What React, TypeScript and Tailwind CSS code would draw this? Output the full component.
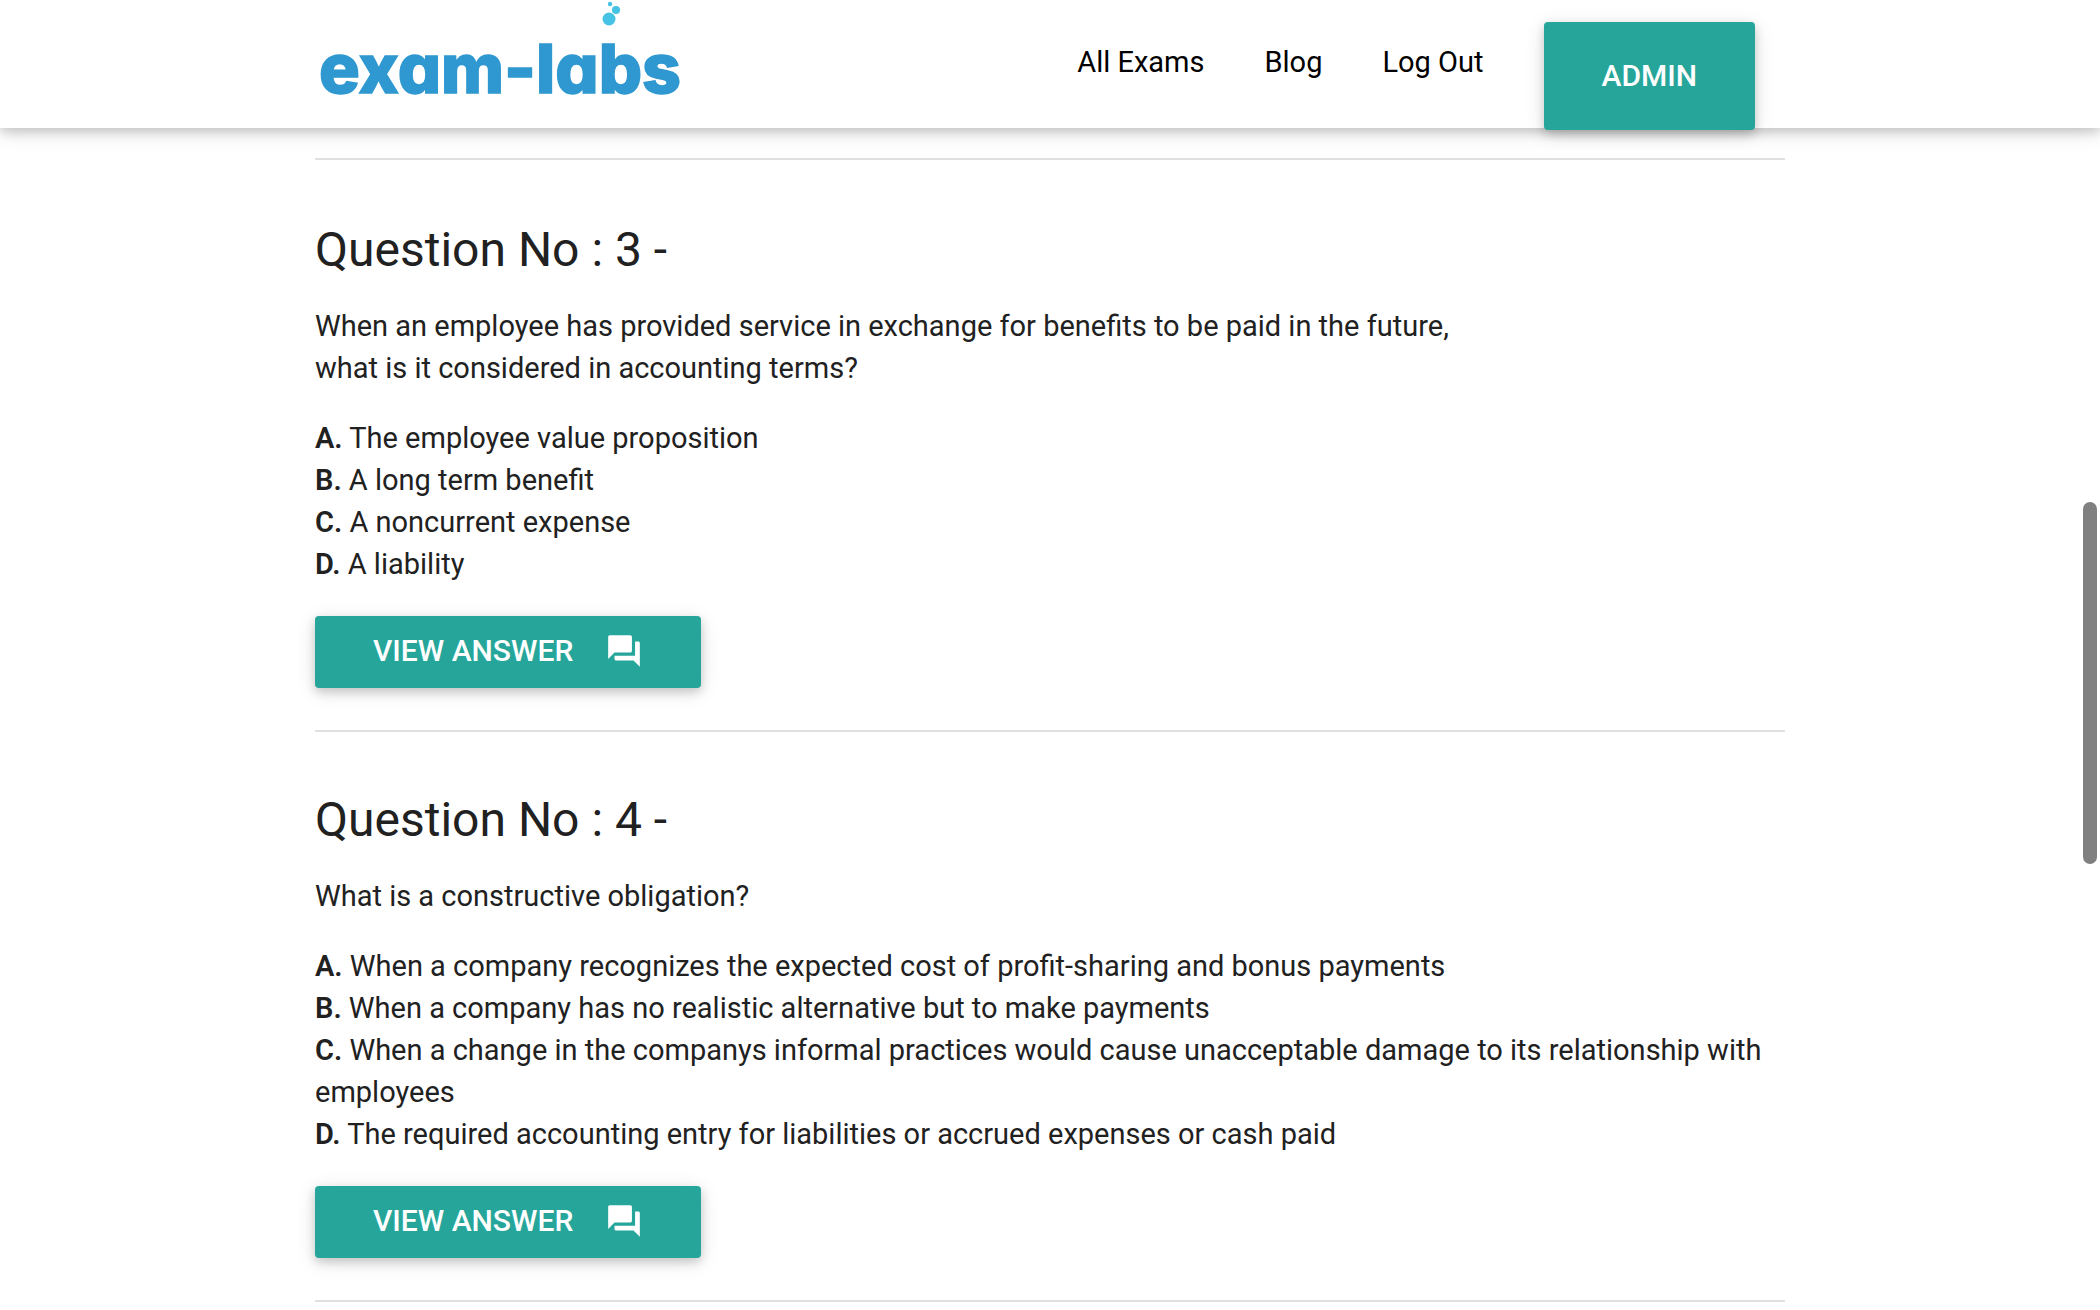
import { MdQuestionAnswer } from "react-icons/md";

interface Answer {
  letter: string;
  text: string;
}

interface Question {
  no: number;
  lines: string[];
  answers: Answer[];
}

const navLinks = ["All Exams", "Blog", "Log Out"];

const questions: Question[] = [
  {
    no: 3,
    lines: [
      "When an employee has provided service in exchange for benefits to be paid in the future,",
      "what is it considered in accounting terms?",
    ],
    answers: [
      { letter: "A.", text: "The employee value proposition" },
      { letter: "B.", text: "A long term benefit" },
      { letter: "C.", text: "A noncurrent expense" },
      { letter: "D.", text: "A liability" },
    ],
  },
  {
    no: 4,
    lines: ["What is a constructive obligation?"],
    answers: [
      { letter: "A.", text: "When a company recognizes the expected cost of profit-sharing and bonus payments" },
      { letter: "B.", text: "When a company has no realistic alternative but to make payments" },
      {
        letter: "C.",
        text: "When a change in the companys informal practices would cause unacceptable damage to its relationship with employees",
      },
      { letter: "D.", text: "The required accounting entry for liabilities or accrued expenses or cash paid" },
    ],
  },
];

const Logo = () => (
  <svg viewBox="0 0 380 128" className="h-32 w-[380px] shrink-0" role="img" aria-label="exam-labs">
    <text
      x="4"
      y="93"
      fill="#2f98d0"
      stroke="#2f98d0"
      strokeWidth="1.5"
      className="font-['Inter',sans-serif] text-[68px] font-extrabold [font-feature-settings:'cv11']"
    >
      exam-labs
    </text>
    <circle cx="294" cy="19" r="6.5" fill="#46c3e4" />
    <circle cx="301" cy="10" r="4" fill="#46c3e4" />
    <circle cx="295" cy="4" r="2.2" fill="#46c3e4" />
  </svg>
);

const Header = () => (
  <header className="relative z-10 flex h-32 items-start justify-between bg-white px-[15%] shadow-[0_4px_10px_0_rgba(0,0,0,0.16),0_4px_20px_0_rgba(0,0,0,0.12)]">
    <a href="#home">
      <Logo />
    </a>
    <nav className="flex items-start text-[29px] text-black">
      {navLinks.map((label) => (
        <a key={label} href="#nav" className="px-[30px] leading-[124px]">
          {label}
        </a>
      ))}
      <button
        type="button"
        className="mx-[30px] mt-[22px] h-[108px] rounded-sm bg-[#26a69a] px-[58px] pb-0.5 text-[30px] font-medium uppercase text-white shadow-[0_4px_10px_0_rgba(0,0,0,0.16),0_4px_20px_0_rgba(0,0,0,0.12)]"
      >
        Admin
      </button>
    </nav>
  </header>
);

const QuestionBlock = ({ no, lines, answers }: Question) => (
  <article>
    <h2 className="pt-[62px] text-[48px] leading-[52px]">Question No : {no} -</h2>
    <p className="mt-[29px]">
      {lines.map((line) => (
        <span key={line} className="block">
          {line}
        </span>
      ))}
    </p>
    <ul className="mt-7">
      {answers.map(({ letter, text }) => (
        <li key={letter}>
          <b className="font-semibold">{letter}</b> {text}
        </li>
      ))}
    </ul>
    <button
      type="button"
      className="mt-[31px] flex h-[72px] items-center gap-8 rounded-sm bg-[#26a69a] px-[58px] pb-0.5 text-[30px] font-medium uppercase text-white shadow-[0_4px_10px_0_rgba(0,0,0,0.16),0_4px_20px_0_rgba(0,0,0,0.12)]"
    >
      View Answer
      <MdQuestionAnswer className="size-[38px]" />
    </button>
    <hr className="mt-[42px] border-t-2 border-[#e0e0e0]" />
  </article>
);

const App = () => {
  return (
    <div className="bg-white font-['Roboto',sans-serif]">
      <Header />

      <main className="px-[15%] pt-[30px] text-[29px] leading-[42px] text-[#212121]">
        <hr className="mb-0.5 border-t-2 border-[#e0e0e0]" />
        {questions.map((question) => (
          <QuestionBlock key={question.no} {...question} />
        ))}
      </main>

      {/* overlay scrollbar thumb */}
      <div className="fixed right-[3px] top-[502px] h-[362px] w-3.5 rounded-full bg-[#808080]" />
    </div>
  );
};

export default App;
